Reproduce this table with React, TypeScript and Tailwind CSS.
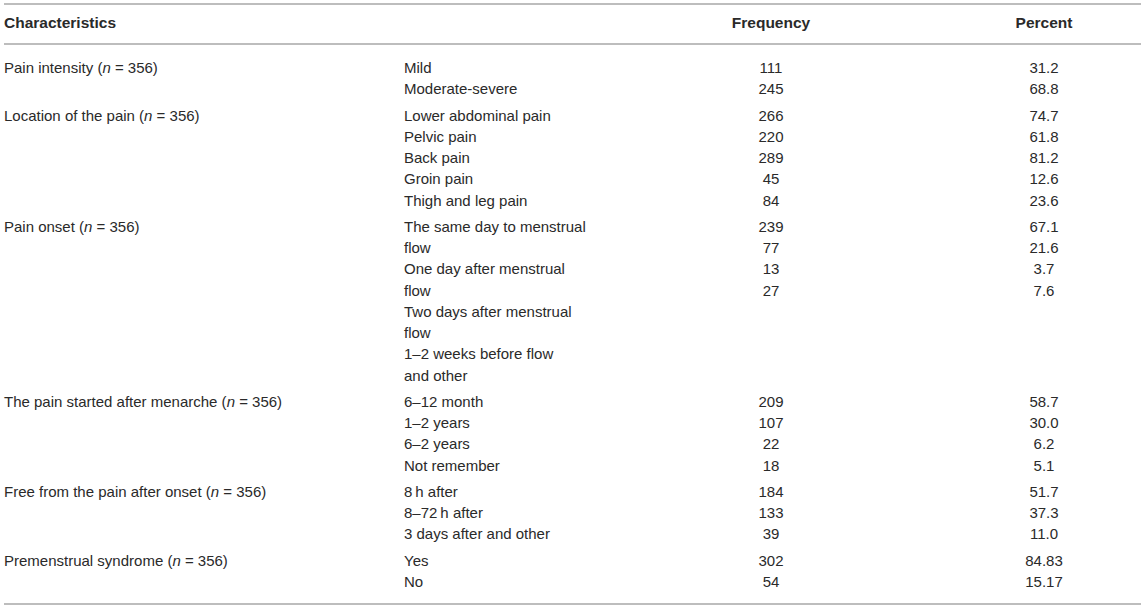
type Group = {
  label: string;
  items: string[];
  freq: string[];
  pct: string[];
};

const groups: Group[] = [
  { label: "Pain intensity", items: ["Mild", "Moderate-severe"], freq: ["111", "245"], pct: ["31.2", "68.8"] },
  {
    label: "Location of the pain",
    items: ["Lower abdominal pain", "Pelvic pain", "Back pain", "Groin pain", "Thigh and leg pain"],
    freq: ["266", "220", "289", "45", "84"],
    pct: ["74.7", "61.8", "81.2", "12.6", "23.6"],
  },
  {
    label: "Pain onset",
    items: [
      "The same day to menstrual",
      "flow",
      "One day after menstrual",
      "flow",
      "Two days after menstrual",
      "flow",
      "1–2 weeks before flow",
      "and other",
    ],
    freq: ["239", "77", "13", "27"],
    pct: ["67.1", "21.6", "3.7", "7.6"],
  },
  {
    label: "The pain started after menarche",
    items: ["6–12 month", "1–2 years", "6–2 years", "Not remember"],
    freq: ["209", "107", "22", "18"],
    pct: ["58.7", "30.0", "6.2", "5.1"],
  },
  {
    label: "Free from the pain after onset",
    items: ["8\u2009h after", "8–72\u2009h after", "3 days after and other"],
    freq: ["184", "133", "39"],
    pct: ["51.7", "37.3", "11.0"],
  },
  { label: "Premenstrual syndrome", items: ["Yes", "No"], freq: ["302", "54"], pct: ["84.83", "15.17"] },
];

function Rule() {
  return <div className="h-[2px] bg-[#bdbdbd]" />;
}

export default function App() {
  return (
    <div className="min-h-screen bg-white px-[4px] pt-[3px] text-[15px] text-[#2a2a2a] font-['Liberation_Sans',Arial,sans-serif]">
      <Rule />
      <div className="flex pt-[7px] pb-[10px] leading-[21px] text-[15.5px] font-bold">
        <div className="w-[400px]">Characteristics</div>
        <div className="w-[296px]" />
        <div className="w-[142px] text-center">Frequency</div>
        <div className="w-[105px]" />
        <div className="w-[194px] text-center">Percent</div>
      </div>
      <Rule />
      <div className="flex flex-col gap-[5px] pt-[12px] pb-[11px] leading-[21.25px]">
        {groups.map((g) => (
          <div key={g.label} className="flex">
            <div className="w-[400px]">
              {g.label} (<i>n</i> = 356)
            </div>
            <div className="w-[296px] flex flex-col whitespace-nowrap">
              {g.items.map((t, i) => (
                <span key={i}>{t}</span>
              ))}
            </div>
            <div className="w-[142px] flex flex-col items-center">
              {g.freq.map((t, i) => (
                <span key={i}>{t}</span>
              ))}
            </div>
            <div className="w-[105px]" />
            <div className="w-[194px] flex flex-col items-center">
              {g.pct.map((t, i) => (
                <span key={i}>{t}</span>
              ))}
            </div>
          </div>
        ))}
      </div>
      <Rule />
    </div>
  );
}
